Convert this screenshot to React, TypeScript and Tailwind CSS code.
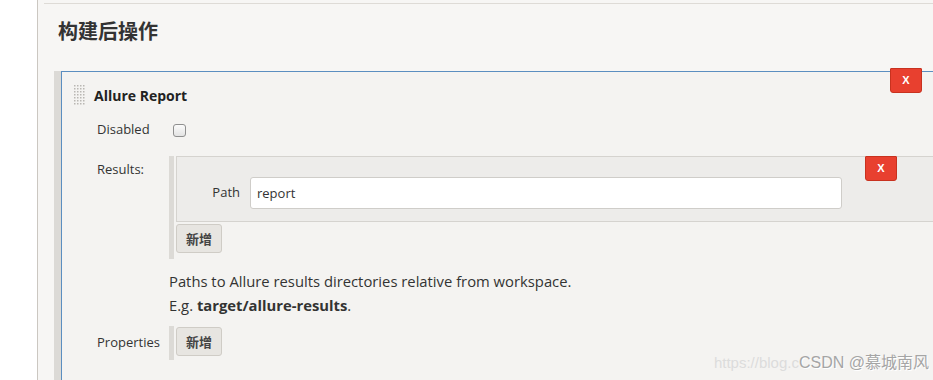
import React from 'react';

const sans = "font-['Open_Sans','Noto_Sans_CJK_SC',sans-serif]";

function DeleteButton({ className }: { className: string }): JSX.Element {
  return (
    <button
      className={`absolute flex h-[25px] w-[32px] items-center justify-center rounded-b-[3px] rounded-t-[1px] border border-[#c8321f] bg-[#e8402f] text-[11px] font-bold leading-none text-white font-['Liberation_Sans',sans-serif] ${className}`}
    >
      X
    </button>
  );
}

function AddButton(): JSX.Element {
  return (
    <button className="flex h-[29px] w-[46px] items-center justify-center rounded-[3px] border border-[#cfccc6] bg-[#e7e5e1] text-[13px] font-bold text-[#444] font-['Noto_Sans_CJK_SC',sans-serif]">
      新增
    </button>
  );
}

function DragHandle(): JSX.Element {
  const dots = [];
  for (let r = 0; r < 7; r++) {
    for (let c = 0; c < 4; c++) {
      dots.push(<rect key={`${r}-${c}`} x={c * 3} y={r * 3} width="1.5" height="1.5" fill="#b9b7b3" />);
    }
  }
  return (
    <svg width="12" height="20" viewBox="0 0 12 20" className="shrink-0">
      {dots}
    </svg>
  );
}

export default function App(): JSX.Element {
  return (
    <div className={`relative flex h-[380px] w-[933px] overflow-hidden bg-white text-[#333] ${sans}`}>
      {/* left gutter */}
      <div className="w-[38px] shrink-0 border-r border-[#cbc7c1] bg-white" />

      <div className="w-[903px] shrink-0 bg-[#f7f6f4] pl-[6px]">
        <div className="mt-[3px] border-t border-[#dedbd6] pt-[13px]">
          <h2 className="pl-[14px] text-[20px] font-bold leading-[28px] text-[#333] font-['Noto_Sans_CJK_SC',sans-serif]">
            构建后操作
          </h2>

          {/* Allure Report step */}
          <div className="ml-[10px] mt-[26px] flex h-[320px]">
            <div className="w-[7px] shrink-0 bg-[#dcdad6]" />
            <div className="relative flex-1 border border-[#5b8ec0] bg-[#f4f3f1]">
              <DeleteButton className="right-[18px] top-[-4px]" />

              <div className="mt-[13px] flex h-[20px] items-center gap-[8px] pl-[12px]">
                <DragHandle />
                <span className="text-[14px] font-bold text-[#222]">Allure Report</span>
              </div>

              <div className="ml-[35px] mt-[16px] grid grid-cols-[72px_1fr]">
                {/* Disabled */}
                <div className="flex h-[18px] items-center text-[13px]">Disabled</div>
                <div className="flex h-[18px] items-center pl-[4px]">
                  <span className="block h-[13px] w-[13px] rounded-[3px] border border-[#8f8f8f] bg-gradient-to-b from-[#fbfbfb] to-[#e3e3e3]" />
                </div>

                {/* Results */}
                <div className="mt-[17px] pt-[4px] text-[13px] leading-[18px]">Results:</div>
                <div className="mt-[17px] flex">
                  <div className="w-[5px] shrink-0 bg-[#dcdad6]" />
                  <div className="ml-[2px] flex-1 pb-[6px]">
                    <div className="relative flex items-center border border-[#d5d3cf] bg-[#edecea] pb-[12px] pl-[35px] pr-[57px] pt-[20px]">
                      <DeleteButton className="right-[42px] top-[-1px]" />
                      <span className="w-[28px] text-right text-[13px]">Path</span>
                      <input
                        readOnly
                        value="report"
                        className="ml-[10px] h-[32px] w-[592px] rounded-[3px] border border-[#cfcdc9] bg-white px-[6px] text-[13px] text-[#333] outline-none"
                      />
                    </div>
                    <div className="mt-[2px]">
                      <AddButton />
                    </div>
                  </div>
                </div>

                {/* help */}
                <div />
                <div className="mt-[10px] text-[14.8px] leading-[24px] text-[#333]">
                  <div>Paths to Allure results directories relative from workspace.</div>
                  <div>
                    E.g. <b>target/allure-results</b>.
                  </div>
                </div>

                {/* Properties */}
                <div className="mt-[9px] flex h-[34px] items-center text-[13px]">Properties</div>
                <div className="mt-[9px] flex h-[34px]">
                  <div className="w-[5px] shrink-0 bg-[#dcdad6]" />
                  <div className="ml-[2px] pt-[1px]">
                    <AddButton />
                  </div>
                </div>
              </div>
            </div>
          </div>
        </div>
      </div>

      {/* watermark */}
      <div className="pointer-events-none absolute bottom-[5px] right-[4px] flex items-baseline">
        <span className="text-[15px] text-[#dcdcdc] font-['Liberation_Sans',sans-serif]">https://blog.c</span>
        <span className="text-[16px] text-[#a5a5a5] font-['Liberation_Sans','Noto_Sans_CJK_SC',sans-serif] [text-shadow:1px_1px_0_#fff]">
          CSDN @慕城南风
        </span>
      </div>
    </div>
  );
}
